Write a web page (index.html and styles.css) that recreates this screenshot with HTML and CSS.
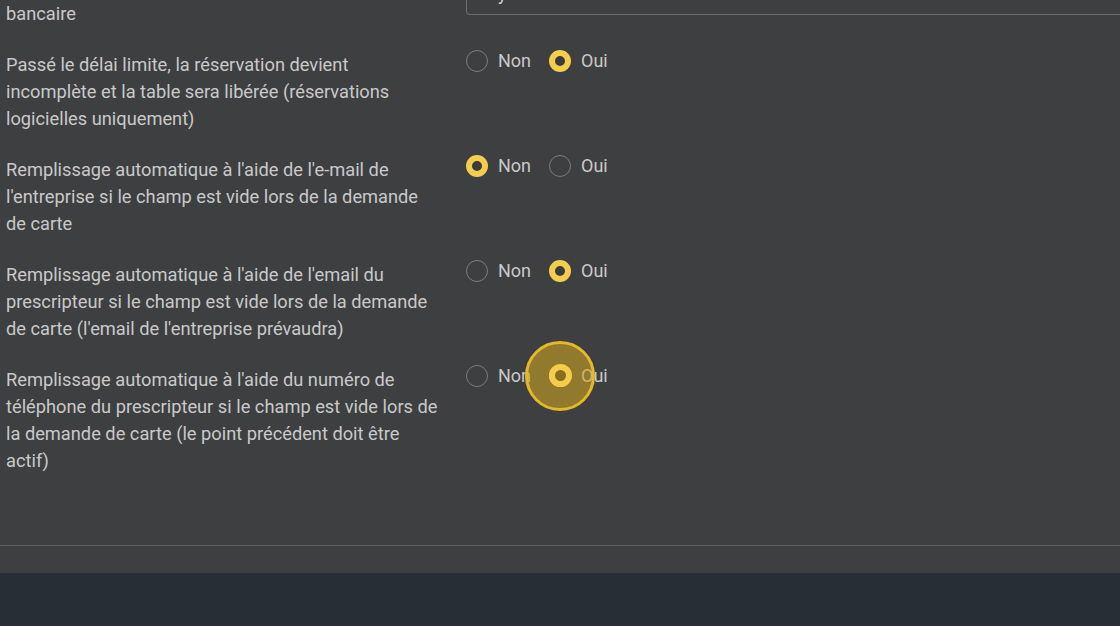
FILE: index.html
```html
<!DOCTYPE html>
<html lang="fr">
<head>
<meta charset="utf-8">
<title>Paramètres</title>
<link rel="stylesheet" href="styles.css">
</head>
<body>
<div class="panel">
  <div class="scroll">
    <div class="content">
      <div class="row">
        <div class="label">Mode de paiement utilisé pour la prise d'empreinte bancaire</div>
        <div class="control">
          <div class="field"><span class="field-text">Paybox</span></div>
        </div>
      </div>
      <div class="row">
        <div class="label">Passé le délai limite, la réservation devient incomplète et la table sera libérée (réservations logicielles uniquement)</div>
        <div class="control radios">
          <label class="radio"><span class="dot"></span><span class="rtext">Non</span></label>
          <label class="radio checked"><span class="dot"></span><span class="rtext">Oui</span></label>
        </div>
      </div>
      <div class="row">
        <div class="label">Remplissage automatique à l'aide de l'e-mail de l'entreprise si le champ est vide lors de la demande de carte</div>
        <div class="control radios">
          <label class="radio checked"><span class="dot"></span><span class="rtext">Non</span></label>
          <label class="radio"><span class="dot"></span><span class="rtext">Oui</span></label>
        </div>
      </div>
      <div class="row">
        <div class="label">Remplissage automatique à l'aide de l'email du prescripteur si le champ est vide lors de la demande de carte (l'email de l'entreprise prévaudra)</div>
        <div class="control radios">
          <label class="radio"><span class="dot"></span><span class="rtext">Non</span></label>
          <label class="radio checked"><span class="dot"></span><span class="rtext">Oui</span></label>
        </div>
      </div>
      <div class="row">
        <div class="label">Remplissage automatique à l'aide du numéro de téléphone du prescripteur si le champ est vide lors de la demande de carte (le point précédent doit être actif)</div>
        <div class="control radios">
          <label class="radio"><span class="dot"></span><span class="rtext">Non</span></label>
          <label class="radio checked focused"><span class="dot"><span class="halo"></span></span><span class="rtext">Oui</span></label>
        </div>
      </div>
    </div>
  </div>
  <div class="footer"></div>
</div>
</body>
</html>
```
FILE: styles.css
```css
html, body {
  margin: 0;
  padding: 0;
}
body {
  background: #272e36;
  font-family: Roboto, "Noto Sans", sans-serif;
  color: #c9c9c9;
  overflow: hidden;
}
.panel {
  position: relative;
  background: #3e3f41;
  height: 573px;
  display: flex;
  flex-direction: column;
  box-shadow: 0 2px 10px rgba(0, 0, 0, 0.35);
}
.scroll {
  flex: 1;
  overflow: hidden;
  border-bottom: 1px solid #5a5b5d;
}
.content {
  margin-top: -27px;
}
.row {
  display: flex;
  align-items: flex-start;
  margin-bottom: 24px;
}
.label {
  width: 433px;
  padding-left: 6px;
  font-size: 18.25px;
  line-height: 27px;
  flex: none;
}
.control {
  margin-left: 27px;
  flex: 1;
}
.field {
  height: 40px;
  border: 1px solid #6c6d6f;
  border-right: none;
  border-radius: 4px 0 0 4px;
  padding-left: 10px;
  font-size: 18px;
  line-height: 40px;
  color: #d8d8d8;
}
.radios {
  display: flex;
  gap: 18px;
  margin-top: -4px;
}
.radio {
  display: flex;
  align-items: center;
  gap: 10px;
  font-size: 18px;
  line-height: 27px;
  color: #c9c9c9;
}
.dot {
  position: relative;
  width: 22px;
  height: 22px;
  box-sizing: border-box;
  border: 1px solid #7b7c7e;
  border-radius: 50%;
}
.checked .dot {
  border: 6.5px solid #f5cd4d;
  background: #3b3b3c;
}
.halo {
  position: absolute;
  left: 50%;
  top: 50%;
  width: 70px;
  height: 70px;
  margin: -35px 0 0 -35px;
  box-sizing: border-box;
  border: 3px solid #e4b828;
  border-radius: 50%;
  background: rgba(214, 170, 30, 0.55);
  z-index: 2;
}
.focused .dot {
  z-index: 3;
}
.focused .dot::after {
  content: "";
  position: absolute;
  inset: -6.5px;
  border: 6.5px solid #f5cd4d;
  border-radius: 50%;
  background: #84701f;
  z-index: 3;
}
.footer {
  height: 27px;
}
```
